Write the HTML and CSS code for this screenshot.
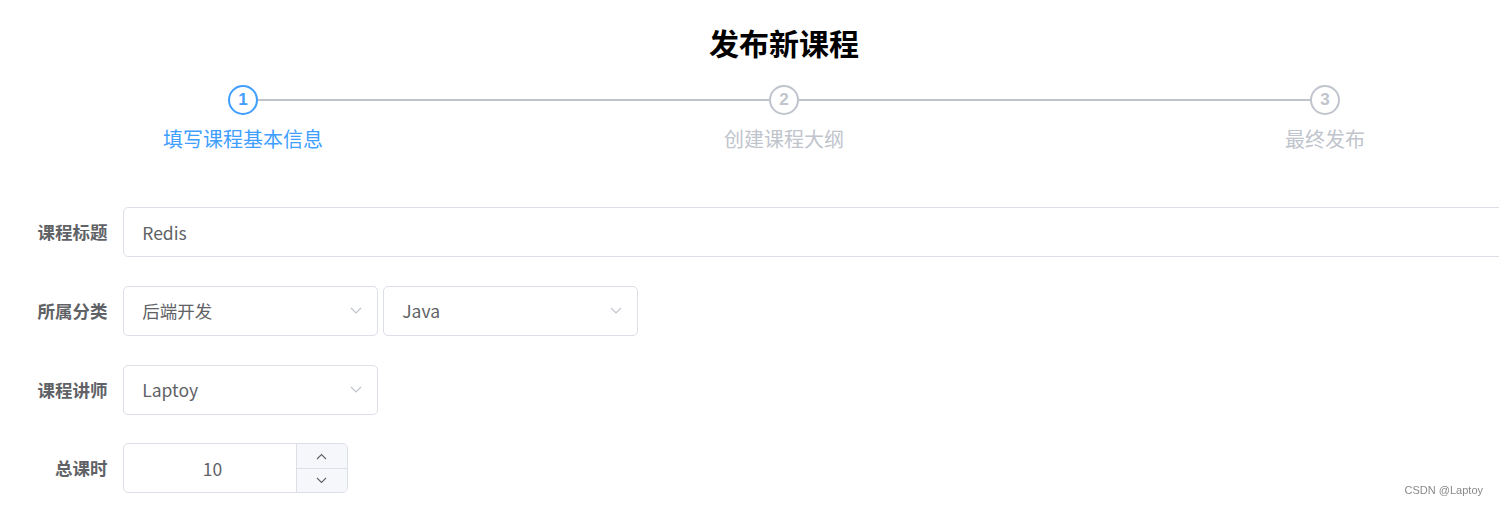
FILE: index.html
```html
<!DOCTYPE html>
<html lang="zh-CN">
<head>
<meta charset="utf-8">
<title>发布新课程</title>
<link rel="stylesheet" href="styles.css">
</head>
<body>
<div class="page">
  <h2 class="title">发布新课程</h2>
  <div class="steps">
    <div class="step active">
      <div class="step-head"><span class="line none"></span><span class="icon">1</span><span class="line"></span></div>
      <div class="step-title">填写课程基本信息</div>
    </div>
    <div class="step">
      <div class="step-head"><span class="line"></span><span class="icon">2</span><span class="line"></span></div>
      <div class="step-title">创建课程大纲</div>
    </div>
    <div class="step">
      <div class="step-head"><span class="line"></span><span class="icon">3</span><span class="line none"></span></div>
      <div class="step-title">最终发布</div>
    </div>
  </div>

  <div class="form">
    <div class="row">
      <div class="label">课程标题</div>
      <div class="input full">Redis</div>
    </div>
    <div class="row">
      <div class="label">所属分类</div>
      <div class="selects">
        <div class="input select"><span>后端开发</span><svg class="chev" width="12" height="7" viewBox="0 0 12 7"><path d="M1 1 L6 6 L11 1" fill="none" stroke="#C0C4CC" stroke-width="1.2"/></svg></div>
        <div class="input select"><span>Java</span><svg class="chev" width="12" height="7" viewBox="0 0 12 7"><path d="M1 1 L6 6 L11 1" fill="none" stroke="#C0C4CC" stroke-width="1.2"/></svg></div>
      </div>
    </div>
    <div class="row">
      <div class="label">课程讲师</div>
      <div class="input select"><span>Laptoy</span><svg class="chev" width="12" height="7" viewBox="0 0 12 7"><path d="M1 1 L6 6 L11 1" fill="none" stroke="#C0C4CC" stroke-width="1.2"/></svg></div>
    </div>
    <div class="row">
      <div class="label">总课时</div>
      <div class="number">
        <div class="num-value">10</div>
        <div class="num-ctrl">
          <div class="num-btn"><svg width="11" height="7" viewBox="0 0 11 7"><path d="M1 6 L5.5 1.5 L10 6" fill="none" stroke="#606266" stroke-width="1.1"/></svg></div>
          <div class="num-btn down"><svg width="11" height="7" viewBox="0 0 11 7"><path d="M1 1 L5.5 5.5 L10 1" fill="none" stroke="#606266" stroke-width="1.1"/></svg></div>
        </div>
      </div>
    </div>
  </div>
</div>
<div class="watermark">CSDN @Laptoy</div>
</body>
</html>
```

FILE: styles.css
```css
html, body {
  margin: 0;
  padding: 0;
  overflow: hidden;
  background: #fff;
  font-family: "Noto Sans CJK SC", "Liberation Sans", sans-serif;
}

.page {
  width: 1623px;
  margin-left: -27.5px;
}

.title {
  margin: 24px 0 25px;
  text-align: center;
  font-size: 30px;
  line-height: 36px;
  font-weight: bold;
  color: #000;
}

.steps {
  display: flex;
}

.step {
  flex: 1;
  display: flex;
  flex-direction: column;
}

.step-head {
  display: flex;
  align-items: center;
  height: 30px;
}

.line {
  flex: 1;
  height: 2.5px;
  background: #C0C4CC;
}

.line.none {
  background: transparent;
}

.icon {
  width: 30px;
  height: 30px;
  box-sizing: border-box;
  border: 2.5px solid #C0C4CC;
  border-radius: 50%;
  display: flex;
  align-items: center;
  justify-content: center;
  font-family: "Liberation Sans", sans-serif;
  font-size: 17px;
  font-weight: bold;
  color: #C0C4CC;
  background: #fff;
}

.step-title {
  text-align: center;
  font-size: 20px;
  line-height: 47.5px;
  color: #C0C4CC;
}

.step.active .icon {
  border-color: #409EFF;
  color: #409EFF;
}

.step.active .step-title {
  color: #409EFF;
}

.form {
  margin-top: 44.5px;
}

.row {
  display: flex;
  align-items: center;
  margin-bottom: 28.75px;
}

.label {
  width: 150px;
  flex: none;
  box-sizing: border-box;
  padding-right: 15px;
  text-align: right;
  font-size: 17.5px;
  font-weight: bold;
  line-height: 50px;
  color: #606266;
}

.input {
  height: 50px;
  box-sizing: border-box;
  border: 1.25px solid #DCDFE6;
  border-radius: 5px;
  padding: 0 18.75px;
  display: flex;
  align-items: center;
  font-size: 17.5px;
  color: #606266;
  background: #fff;
}

.input.full {
  flex: 1;
}

.selects {
  display: flex;
  gap: 5px;
}

.select {
  width: 255px;
  justify-content: space-between;
  padding-right: 15px;
}

.chev {
  display: block;
}

.number {
  width: 225px;
  height: 50px;
  box-sizing: border-box;
  border: 1.25px solid #DCDFE6;
  border-radius: 5px;
  display: flex;
  overflow: hidden;
}

.num-value {
  flex: 1;
  display: flex;
  align-items: center;
  justify-content: center;
  padding-left: 6px;
  font-size: 17.5px;
  color: #606266;
}

.num-ctrl {
  width: 50px;
  border-left: 1.25px solid #DCDFE6;
  background: #F5F7FA;
  display: flex;
  flex-direction: column;
}

.num-btn {
  flex: 1;
  display: flex;
  align-items: center;
  justify-content: center;
}

.num-btn.down {
  border-top: 1.25px solid #DCDFE6;
}

.watermark {
  position: fixed;
  right: 16px;
  bottom: 10px;
  font-family: "Liberation Sans", sans-serif;
  font-size: 11px;
  color: #8a8a8a;
}
```
